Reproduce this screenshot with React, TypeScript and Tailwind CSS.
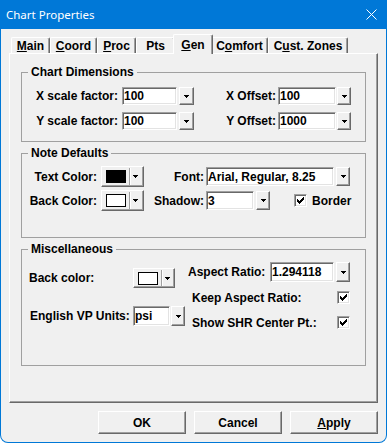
import React from "react";

const raised =
  "border border-t-white border-l-white border-r-[#696969] border-b-[#696969] shadow-[inset_-1px_-1px_0_#a0a0a0] bg-[#f0f0f0]";
const sunken =
  "border border-t-[#a0a0a0] border-l-[#a0a0a0] border-r-white border-b-white shadow-[inset_1px_1px_0_#696969,inset_-1px_-1px_0_#e3e3e3] bg-white";

function Arrow() {
  return (
    <svg width="5" height="3" viewBox="0 0 5 3" shapeRendering="crispEdges">
      <rect x="0" y="0" width="5" height="1" fill="#000" />
      <rect x="1" y="1" width="3" height="1" fill="#000" />
      <rect x="2" y="2" width="1" height="1" fill="#000" />
    </svg>
  );
}

function DropBtn({ cls }: { cls: string }) {
  return (
    <div className={`${raised} ${cls} shrink-0 flex items-center justify-center`}>
      <Arrow />
    </div>
  );
}

function Input({ cls, value }: { cls: string; value: string }) {
  return (
    <div className={`${sunken} ${cls} shrink-0 flex items-center pl-[1px] whitespace-nowrap overflow-hidden`}>
      {value}
    </div>
  );
}

function ColorBtn({ cls, black }: { cls: string; black?: boolean }) {
  return (
    <div className={`${raised} ${cls} shrink-0 flex items-center`}>
      <div
        className={`ml-[4px] w-[20px] h-[13px] border border-black ${black ? "bg-black" : "bg-white"}`}
      />
      <div className="ml-[3px] w-px self-stretch my-[1px] bg-[#a0a0a0] shadow-[1px_0_0_#fff]" />
      <div className="ml-[3px] flex">
        <Arrow />
      </div>
    </div>
  );
}

function Check() {
  return (
    <div className={`${sunken} w-[13px] h-[13px] shrink-0 flex items-center justify-center`}>
      <svg width="7" height="7" viewBox="0 0 7 7" shapeRendering="crispEdges">
        <rect x="6" y="0" width="1" height="1" fill="#000" />
        <rect x="5" y="1" width="2" height="1" fill="#000" />
        <rect x="0" y="2" width="1" height="1" fill="#000" />
        <rect x="4" y="2" width="3" height="1" fill="#000" />
        <rect x="0" y="3" width="2" height="1" fill="#000" />
        <rect x="3" y="3" width="3" height="1" fill="#000" />
        <rect x="0" y="4" width="5" height="1" fill="#000" />
        <rect x="1" y="5" width="3" height="1" fill="#000" />
        <rect x="2" y="6" width="1" height="1" fill="#000" />
      </svg>
    </div>
  );
}

const tab =
  "h-[16px] shrink-0 flex items-center justify-center border-t border-l border-r border-t-white border-l-white border-r-[#696969] rounded-t-[2px] shadow-[inset_-1px_0_0_#a0a0a0] whitespace-nowrap";

function U({ children }: { children: React.ReactNode }) {
  return <span className="underline underline-offset-1 decoration-1">{children}</span>;
}

function Button({ children }: { children: React.ReactNode }) {
  return (
    <div className={`${raised} w-[88px] h-[23px] flex items-center justify-center`}>
      {children}
    </div>
  );
}

export default function App() {
  return (
    <div className="w-[387px] h-[443px] bg-[#0078d7] rounded-b-[8px] flex flex-col font-['Liberation_Sans',Arial,sans-serif] text-[12px] font-bold leading-[14px] text-black">
      {/* Title bar */}
      <div className="h-[29px] shrink-0 flex items-center justify-between pl-[6px] pr-[10px]">
        <span className="text-white font-normal font-['Noto_Sans',sans-serif] text-[11.5px]">
          Chart Properties
        </span>
        <svg width="11" height="11" viewBox="0 0 11 11">
          <path d="M0.5 0.5 L10.5 10.5 M10.5 0.5 L0.5 10.5" stroke="#fff" strokeWidth="1" />
        </svg>
      </div>

      {/* Client */}
      <div className="flex-1 mx-px mb-px bg-[#f0f0f0] rounded-b-[7px] px-[8px] pt-[5px] flex flex-col">
        {/* Tabs */}
        <div className="h-[19px] flex items-end pl-[2px]">
          <div className={`${tab} w-[39px]`}>
            <span>
              <U>M</U>ain
            </span>
          </div>
          <div className={`${tab} w-[47px]`}>
            <span>
              <U>C</U>oord
            </span>
          </div>
          <div className={`${tab} w-[39px]`}>
            <span>
              <U>P</U>roc
            </span>
          </div>
          <div className={`${tab} w-[39px]`}>
            <span>Pts</span>
          </div>
          <div className="relative z-10 -mx-[2px] -mb-px w-[40px] h-[20px] shrink-0 flex items-center justify-center pt-[1px] bg-[#f0f0f0] border-t border-l border-r border-t-white border-l-white border-r-[#696969] rounded-t-[2px] shadow-[inset_-1px_0_0_#a0a0a0]">
            <span>
              <U>G</U>en
            </span>
          </div>
          <div className={`${tab} w-[57px]`}>
            <span>
              C<U>o</U>mfort
            </span>
          </div>
          <div className={`${tab} w-[80px]`}>
            <span>
              C<U>u</U>st. Zones
            </span>
          </div>
        </div>

        {/* Panel */}
        <div className="h-[350px] shrink-0 border border-t-white border-l-white border-r-[#696969] border-b-[#696969] shadow-[inset_-1px_-1px_0_#a0a0a0] flex flex-col pl-[11px]">
          {/* Chart Dimensions */}
          <fieldset className="w-[345px] h-[77px] mt-[11px] border border-[#a0a0a0]">
            <legend className="ml-[6px] px-[3px] leading-[14px]">Chart Dimensions</legend>
            <div className="flex items-center h-[18px] mt-[8px]">
              <span className="w-[96px] shrink-0 text-right">X scale factor:</span>
              <Input cls="ml-[4px] w-[55px] h-[18px]" value="100" />
              <DropBtn cls="ml-[2px] w-[15px] h-[18px]" />
              <span className="w-[82px] shrink-0 text-right">X Offset:</span>
              <Input cls="ml-[2px] w-[58px] h-[18px]" value="100" />
              <DropBtn cls="ml-[1px] w-[14px] h-[18px]" />
            </div>
            <div className="flex items-center h-[18px] mt-[7px]">
              <span className="w-[96px] shrink-0 text-right">Y scale factor:</span>
              <Input cls="ml-[4px] w-[55px] h-[18px]" value="100" />
              <DropBtn cls="ml-[2px] w-[15px] h-[18px]" />
              <span className="w-[82px] shrink-0 text-right">Y Offset:</span>
              <Input cls="ml-[2px] w-[58px] h-[18px]" value="1000" />
              <DropBtn cls="ml-[1px] w-[14px] h-[18px]" />
            </div>
          </fieldset>

          {/* Note Defaults */}
          <fieldset className="w-[345px] h-[92px] mt-[4px] border border-[#a0a0a0]">
            <legend className="ml-[6px] px-[3px] leading-[14px]">Note Defaults</legend>
            <div className="flex items-center h-[21px] mt-[6px]">
              <span className="w-[75px] shrink-0 text-right">Text Color:</span>
              <ColorBtn cls="ml-[4px] w-[43px] h-[21px]" black />
              <span className="w-[60px] shrink-0 text-right">Font:</span>
              <Input cls="ml-[2px] w-[128px] h-[19px]" value="Arial, Regular, 8.25" />
              <DropBtn cls="ml-[2px] w-[14px] h-[19px]" />
            </div>
            <div className="flex items-center h-[21px] mt-[3px]">
              <span className="w-[75px] shrink-0 text-right">Back Color:</span>
              <ColorBtn cls="ml-[4px] w-[43px] h-[21px]" />
              <span className="w-[60px] shrink-0 text-right">Shadow:</span>
              <Input cls="ml-[2px] w-[48px] h-[19px]" value="3" />
              <DropBtn cls="ml-[2px] w-[14px] h-[19px]" />
              <div className="ml-[24px] flex">
                <Check />
              </div>
              <span className="ml-[5px]">Border</span>
            </div>
          </fieldset>

          {/* Miscellaneous */}
          <fieldset className="w-[345px] h-[124px] mt-[4px] border border-[#a0a0a0]">
            <legend className="ml-[6px] px-[3px] leading-[14px]">Miscellaneous</legend>
            <div className="flex">
              <div className="w-[166px] shrink-0 flex flex-col">
                <div className="flex items-center h-[20px] mt-[12px]">
                  <span className="w-[111px] shrink-0 pl-[7px]">Back color:</span>
                  <ColorBtn cls="w-[42px] h-[20px]" />
                </div>
                <div className="flex items-center h-[20px] mt-[18px]">
                  <span className="w-[111px] shrink-0 pl-[8px]">English VP Units:</span>
                  <Input cls="w-[37px] h-[20px]" value="psi" />
                  <DropBtn cls="ml-[1px] w-[14px] h-[20px]" />
                </div>
              </div>
              <div className="flex flex-col">
                <div className="flex items-center h-[20px] mt-[6px]">
                  <span className="w-[82px] shrink-0">Aspect Ratio:</span>
                  <Input cls="w-[64px] h-[20px]" value="1.294118" />
                  <DropBtn cls="ml-[2px] w-[14px] h-[20px]" />
                </div>
                <div className="flex items-center h-[13px] mt-[9px] pl-[4px]">
                  <span className="w-[145px] shrink-0">Keep Aspect Ratio:</span>
                  <Check />
                </div>
                <div className="flex items-center h-[13px] mt-[12px] pl-[4px]">
                  <span className="w-[145px] shrink-0">Show SHR Center Pt.:</span>
                  <Check />
                </div>
              </div>
            </div>
          </fieldset>
        </div>

        {/* Buttons */}
        <div className="flex justify-end gap-[8px] mt-[8px]">
          <Button>OK</Button>
          <Button>Cancel</Button>
          <Button>
            <span>
              <U>A</U>pply
            </span>
          </Button>
        </div>
      </div>
    </div>
  );
}
